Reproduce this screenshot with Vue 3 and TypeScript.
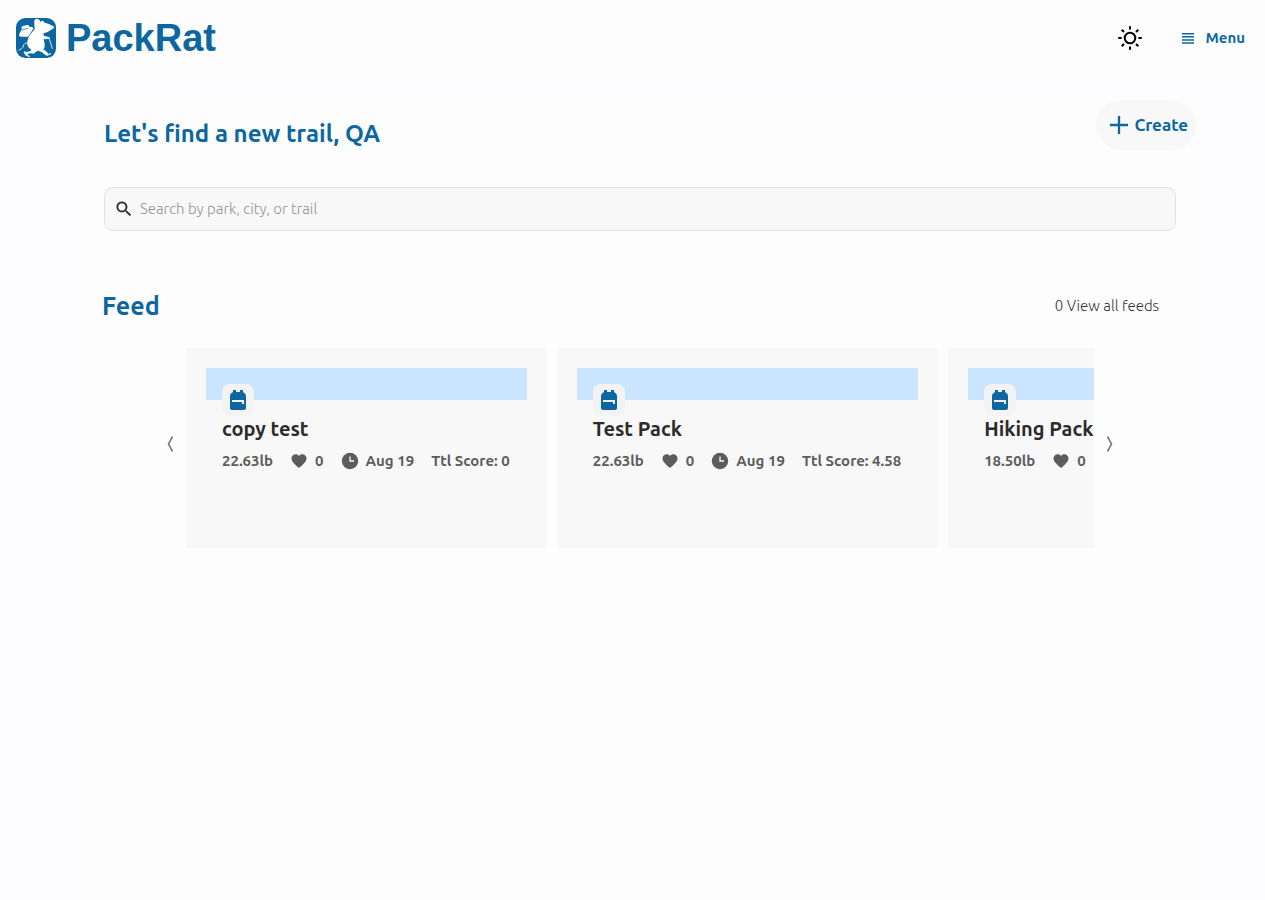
<script setup lang="ts">
import { ref } from 'vue'

interface Pack {
  name: string
  weight: string
  likes: number
  date: string
  score: string
}

const query = ref('')
const strip = ref<HTMLElement | null>(null)

const packs: Pack[] = [
  { name: 'copy test', weight: '22.63lb', likes: 0, date: 'Aug 19', score: '0' },
  { name: 'Test Pack', weight: '22.63lb', likes: 0, date: 'Aug 19', score: '4.58' },
  { name: 'Hiking Pack', weight: '18.50lb', likes: 0, date: 'Aug 19', score: '4.58' },
]

function scroll(direction: number) {
  strip.value?.scrollBy({ left: direction * 370, behavior: 'smooth' })
}
</script>

<template>
  <div class="page">
    <header class="topbar">
      <a class="brand" href="#">
        <svg class="logo" viewBox="0 0 120 120" aria-hidden="true">
          <rect width="120" height="120" rx="28" fill="#0c67a1" />
          <g fill="#fff">
            <path d="M55 14C53 7 58 1 65 3C70 4 73 8 74 13C76 8 80 7 83 10L85 14C94 15 104 20 112 25C116 28 114 32 109 33L96 41C89 44 85 45 82 45L84 54L100 57L101 61L90 64L83 63L86 78C87 86 85 91 82 94L94 103L96 108L104 105L105 108L94 113L89 112L78 103L66 98C60 101 56 104 53 107L44 106L37 107L34 110L42 115L40 118L28 112L23 103L25 100L31 102L44 99L46 95C38 90 32 82 34 72C35 64 38 56 43 49L57 32C55 27 55 20 55 14Z" />
            <path d="M18 33C14 29 17 25 21 24L33 21C38 20 41 24 40 28L47 26L53 31L40 50C37 56 32 58 27 56L14 56C9 55 8 51 11 46Z" />
          </g>
          <path d="M17 36L36 31" fill="none" stroke="#0c67a1" stroke-width="2" />
          <path d="M38 75C28 73 23 78 22 84C21 91 14 94 9 96M98 58L109 91" fill="none" stroke="#fff" stroke-width="2.5" stroke-linecap="round" />
        </svg>
        <span class="brand-name">PackRat</span>
      </a>
      <div class="top-actions">
        <button class="icon-btn" type="button" aria-label="Toggle theme">
          <svg width="26" height="26" viewBox="0 0 26 26" fill="none" stroke="#000" stroke-width="2">
            <circle cx="13" cy="13" r="5.3" />
            <path d="M13 1.2v3.4M13 21.4v3.4M1.2 13h3.4M21.4 13h3.4M4.7 4.7l2.3 2.3M19 19l2.3 2.3M4.7 21.3L7 19M19 7l2.3-2.3" />
          </svg>
        </button>
        <button class="menu-btn" type="button">
          <svg width="12" height="12" viewBox="0 0 12 12" stroke="#0c67a1" stroke-width="1.5">
            <path d="M0 1.7h12M0 4.8h12M0 7.9h12M0 11h12" />
          </svg>
          Menu
        </button>
      </div>
    </header>

    <main class="content">
      <section class="greeting">
        <h1>Let's find a new trail, QA</h1>
        <button class="create" type="button">
          <svg width="18" height="18" viewBox="0 0 18 18" stroke="#0c67a1" stroke-width="2.3">
            <path d="M9 0v18M0 9h18" />
          </svg>
          Create
        </button>
      </section>

      <label class="search">
        <svg width="20" height="20" viewBox="0 0 24 24" aria-hidden="true">
          <path fill="#2b2b2b" stroke="#2b2b2b" stroke-width="0.2" d="M15.5 14h-.79l-.28-.27A6.47 6.47 0 0 0 16 9.5 6.5 6.5 0 1 0 9.5 16c1.61 0 3.09-.59 4.23-1.57l.27.28v.79l5 4.99L20.49 19l-4.99-5zm-6 0C7.01 14 5 11.99 5 9.5S7.01 5 9.5 5 14 7.01 14 9.5 11.99 14 9.5 14z" />
        </svg>
        <input v-model="query" type="text" aria-label="Search trails" placeholder="Search by park, city, or trail" />
      </label>

      <section class="feed-head">
        <h2>Feed</h2>
        <a href="#">0 View all feeds</a>
      </section>

      <section class="carousel">
        <button class="arrow" type="button" aria-label="Previous" @click="scroll(-1)">
          <svg width="7" height="16" viewBox="0 0 7 16"><path d="M5.5 .5L1.5 8l4 7.5" /></svg>
        </button>
        <div ref="strip" class="strip">
          <article v-for="pack in packs" :key="pack.name" class="card">
            <div class="band">
              <span class="badge">
                <svg width="24" height="24" viewBox="0 0 24 24" aria-hidden="true">
                  <path fill="#0c67a1" fill-rule="evenodd" d="M20 8v12c0 1.1-.9 2-2 2H6c-1.1 0-2-.9-2-2V8c0-1.86 1.28-3.41 3-3.86V2h3v2h4V2h3v2.14c1.72.45 3 2 3 3.86zM6 12v2h10v2h2v-4H6z" />
                </svg>
              </span>
            </div>
            <div class="details">
              <h3>{{ pack.name }}</h3>
              <div class="stats">
                <span>{{ pack.weight }}</span>
                <span class="stat">
                  <svg width="18" height="18" viewBox="0 0 24 24" aria-hidden="true">
                    <path fill="#5c5c5c" d="M12 21.35l-1.45-1.32C5.4 15.36 2 12.28 2 8.5 2 5.42 4.42 3 7.5 3c1.74 0 3.41.81 4.5 2.09C13.09 3.81 14.76 3 16.5 3 19.58 3 22 5.42 22 8.5c0 3.78-3.4 6.86-8.55 11.54L12 21.35z" />
                  </svg>
                  {{ pack.likes }}
                </span>
                <span class="stat">
                  <svg width="18" height="18" viewBox="0 0 18 18" aria-hidden="true">
                    <circle cx="9" cy="9" r="8.2" fill="#5c5c5c" />
                    <path d="M9 4.5V9h4" fill="none" stroke="#f8f8f8" stroke-width="1.3" />
                  </svg>
                  {{ pack.date }}
                </span>
                <span>Ttl Score: {{ pack.score }}</span>
              </div>
            </div>
          </article>
        </div>
        <button class="arrow" type="button" aria-label="Next" @click="scroll(1)">
          <svg width="7" height="16" viewBox="0 0 7 16"><path d="M1.5 .5L5.5 8l-4 7.5" /></svg>
        </button>
      </section>
    </main>
  </div>
</template>

<style>
body {
  margin: 0;
  background: #fdfcff;
}
</style>

<style scoped>
.page {
  display: flex;
  flex-direction: column;
  min-height: 100vh;
  font-family: Ubuntu, "Noto Sans", "Open Sans", sans-serif;
  color: #0c67a1;
}
button {
  display: flex;
  align-items: center;
  border: 0;
  padding: 0;
  background: none;
  color: inherit;
  font: inherit;
  cursor: pointer;
}
a {
  color: inherit;
  text-decoration: none;
}
h1,
h2,
h3 {
  margin: 0;
  font-weight: 600;
}
svg {
  flex: none;
}
.topbar {
  display: flex;
  justify-content: space-between;
  align-items: center;
  height: 76px;
  padding: 0 20px 0 16px;
  background: #fdfdfd;
}
.brand {
  display: flex;
  align-items: center;
  gap: 10px;
}
.logo {
  width: 40px;
  height: 40px;
}
.brand-name {
  font: bold 38px/46px "Liberation Sans", Arial, sans-serif;
}
.top-actions {
  display: flex;
  align-items: center;
  gap: 39px;
}
.menu-btn {
  gap: 11px;
  font-size: 15px;
  line-height: 18px;
  font-weight: 600;
}
.content {
  flex: 1;
  margin: 24px 73px 0 88px;
  padding: 0 16px;
  background: #fdfdfd;
}
.greeting {
  display: flex;
  justify-content: space-between;
  align-items: flex-start;
  margin-right: -20px;
}
h1 {
  padding-top: 16px;
  font-size: 24px;
  line-height: 36px;
}
.create {
  height: 50px;
  padding: 0 8px 0 14px;
  gap: 6px;
  border-radius: 25px;
  background: #f8f8f8;
  font-size: 17px;
  line-height: 22px;
  font-weight: 600;
}
.search {
  display: flex;
  align-items: center;
  gap: 6px;
  height: 42px;
  margin-top: 37px;
  padding: 0 9px;
  border: 1px solid #e2e2e2;
  border-radius: 9px;
  background: #f8f8f8;
}
.greeting + .search {
  margin-top: 35px;
}
.search input {
  flex: 1;
  border: 0;
  outline: 0;
  padding: 0;
  background: none;
  color: #2b2b2b;
  font: 300 15px/22px Ubuntu, "Open Sans", sans-serif;
}
.search input::placeholder {
  color: #929292;
  opacity: 1;
}
.feed-head {
  display: flex;
  justify-content: space-between;
  align-items: center;
  margin: 57px 17px 0 -2px;
}
h2 {
  font-size: 25px;
  line-height: 36px;
}
.feed-head a {
  color: #333;
  font-size: 15px;
  line-height: 18px;
  font-weight: 300;
}
.carousel {
  display: flex;
  align-items: center;
  gap: 12px;
  margin: 24px 63px 0;
}
.arrow {
  padding-bottom: 8px;
}
.arrow path {
  fill: none;
  stroke: #7b7b7b;
  stroke-width: 1.6;
}
.strip {
  display: flex;
  flex: 1;
  min-width: 0;
  gap: 10px;
  overflow: hidden;
}
.card {
  flex: none;
  height: 200px;
  box-sizing: border-box;
  padding: 20px;
  border-radius: 4px;
  background: #f8f8f8;
}
.band {
  height: 32px;
  box-sizing: border-box;
  padding: 16px 16px 0;
  background: #cbe5ff;
}
.badge {
  display: flex;
  align-items: center;
  justify-content: center;
  width: 32px;
  height: 32px;
  border-radius: 8px;
  background: #f3f3f3;
}
.details {
  padding: 16px 17px 0 16px;
}
h3 {
  color: #2b2b2b;
  font-size: 20px;
  line-height: 26px;
  white-space: nowrap;
}
.stats {
  display: flex;
  align-items: center;
  gap: 17px;
  margin-top: 8px;
  color: #5c5c5c;
  font-size: 15px;
  line-height: 22px;
  font-weight: 600;
  white-space: nowrap;
}
.stat {
  display: flex;
  align-items: center;
  gap: 7px;
}
</style>
